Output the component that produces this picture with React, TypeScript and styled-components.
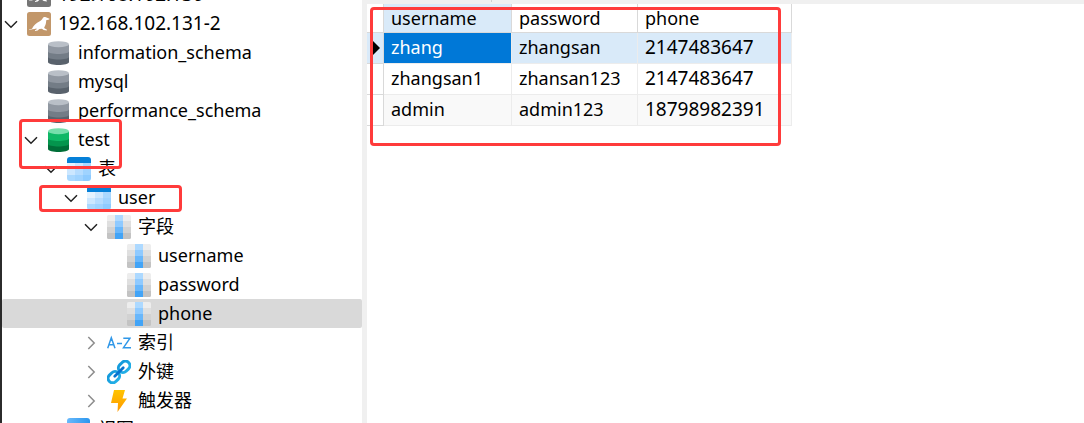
import React from "react";
import styled, { createGlobalStyle } from "styled-components";

const GlobalStyle = createGlobalStyle`
  *, *::before, *::after { box-sizing: border-box; }
  body {
    margin: 0;
    background: #fff;
    color: #000;
    font-family: "Noto Sans", "Noto Sans CJK SC", sans-serif;
    font-size: 18px;
  }
`;

const Window = styled.div`
  position: relative;
  display: flex;
  height: 100vh;
  overflow: hidden;
  border-left: 2px solid #2b2b2b;
`;

const Sidebar = styled.nav`
  flex: 0 0 365px;
  border-right: 5px solid #f0f0f0;
  display: flex;
  flex-direction: column;
  overflow: hidden;
`;

const Tree = styled.ul`
  list-style: none;
  margin: -20px 0 0;
  padding: 0;
`;

const TreeRow = styled.li<{ $level: number; $selected?: boolean }>`
  display: flex;
  align-items: center;
  height: 29px;
  padding-left: ${(p) => p.$level * 20}px;
  border-radius: 2px;
  background: ${(p) => (p.$selected ? "#d9d9d9" : "transparent")};
`;

const Toggle = styled.button`
  width: 18px;
  height: 24px;
  margin-right: 7px;
  padding: 0;
  border: 0;
  background: none;
  display: flex;
  align-items: center;
  justify-content: center;
`;

const ToggleSpace = styled.span`
  width: 25px;
`;

const IconSvg = styled.svg`
  width: 24px;
  height: 24px;
  flex: none;
`;

const Label = styled.span<{ $numeric?: boolean }>`
  margin-left: 7px;
  padding-bottom: 1px;
  line-height: 28px;
  font-size: ${(p) => (p.$numeric ? 19 : 18)}px;
  white-space: nowrap;
`;

const Main = styled.main`
  flex: 1;
  min-width: 0;
  display: flex;
  flex-direction: column;
  align-items: flex-start;
`;

const TopBar = styled.div`
  align-self: stretch;
  height: 4px;
  padding-left: 124px;
  background: #f0f0f0;
`;

const TabEdge = styled.div`
  width: 1px;
  height: 2px;
  background: #d0d0d0;
`;

const Grid = styled.table`
  table-layout: fixed;
  width: 425px;
  border-collapse: separate;
  border-spacing: 0;
`;

const HeadCell = styled.th<{ $active?: boolean }>`
  height: 29px;
  padding: 0 0 0 7px;
  line-height: 28px;
  font-weight: 400;
  text-align: left;
  border-right: 1px solid #d9d9d9;
  border-bottom: 1px solid #d9d9d9;
  background: ${(p) => (p.$active ? "#d9eaf9" : "#fff")};
`;

type RowTone = "current" | "plain" | "striped";
const rowColors: Record<RowTone, string> = {
  current: "#d9eaf9",
  plain: "#fff",
  striped: "#f9f9f9",
};

const GutterCell = styled.td<{ $tone: RowTone }>`
  height: 31px;
  padding: 0;
  border-right: 1px solid #d9d9d9;
  border-bottom: 1px solid #d9d9d9;
  background: ${(p) => (p.$tone === "current" ? "#d9eaf9" : "#fff")};
`;

const Cell = styled.td<{ $tone: RowTone; $picked?: boolean; $numeric?: boolean }>`
  height: 31px;
  padding: 0 0 2px 7px;
  line-height: 28px;
  font-size: ${(p) => (p.$numeric ? 19 : 18)}px;
  border-right: 1px solid #ececec;
  border-bottom: 1px solid #ececec;
  color: ${(p) => (p.$picked ? "#fff" : "#000")};
  background: ${(p) => (p.$picked ? "#0078d7" : rowColors[p.$tone])};
`;

const Pointer = styled.svg`
  display: block;
  width: 9px;
  height: 14px;
  margin-left: 5px;
`;

const Marker = styled.div<{ $x: number; $y: number; $w: number; $h: number }>`
  position: absolute;
  left: ${(p) => p.$x}px;
  top: ${(p) => p.$y}px;
  width: ${(p) => p.$w}px;
  height: ${(p) => p.$h}px;
  border: 3px solid #ff3b3b;
  border-radius: 4px;
  pointer-events: none;
`;

const Chevron = ({ open }: { open: boolean }) => (
  <svg width="14" height="14" viewBox="0 0 14 14" fill="none">
    {open ? (
      <path d="M1 4.2 7 10.2 13 4.2" stroke="#222" strokeWidth="1.500" />
    ) : (
      <path d="M4.300 1 10.200 7 4.300 13" stroke="#8c8c8c" strokeWidth="1.500" />
    )}
  </svg>
);

const SealIcon = ({ color }: { color: string }) => (
  <IconSvg viewBox="0 0 24 24">
    <rect width="24" height="24" rx="2.5" fill={color} />
    <path
      fill="#fff"
      d="M1.800 17.800 5 16.800C6.500 13.500 9 11 12.800 9.300c1.700-.8 2.400-1.900 2.900-3 .6-1.300 1.900-1.700 3.200-1.100l3.600 1.500-.3.800-3 .8c-.1 2.400-.3 4.400-1.500 6.200l-.6 1.400 2.900 1.800-.2.900-3.100-.6-1.800-1.300-2.600.4-1.600 1.500-2.700.4v-.7l1.700-1-.3-.9c-1.500.5-2.600.6-4 .8l-3 .9-.4-.4 1-.7z"
    />
  </IconSvg>
);

const DatabaseIcon = ({ tones }: { tones: string[] }) => (
  <IconSvg viewBox="0 0 24 24">
    <path d="M1 15.500h21v5.500c0 4-21 4-21 0z" fill={tones[3]} />
    <path d="M1 10h21v6c0 3.300-21 3.300-21 0z" fill={tones[2]} />
    <path d="M1 3.500h21v7c0 3.300-21 3.300-21 0z" fill={tones[1]} />
    <ellipse cx="11.500" cy="3.200" rx="10.500" ry="3" fill={tones[0]} />
  </IconSvg>
);

const GREY = ["#b9bfc7", "#9097a1", "#737c86", "#59626c"];
const GREEN = ["#76dfac", "#0fb866", "#04954d", "#006e38"];

const TableIcon = () => (
  <IconSvg viewBox="0 0 24 24">
    <clipPath id="tableShape"><rect width="24" height="24" rx="3" /></clipPath>
    <g clipPath="url(#tableShape)" shapeRendering="crispEdges">
      <rect width="24" height="6" fill="#0580d8" />
      <rect y="6" width="8" height="6" fill="#e5f3ff" />
      <rect x="8" y="6" width="8" height="6" fill="#cce7ff" />
      <rect x="16" y="6" width="8" height="6" fill="#a9d8ff" />
      <rect y="12" width="8" height="6" fill="#cce7ff" />
      <rect x="8" y="12" width="8" height="6" fill="#b5dcff" />
      <rect x="16" y="12" width="8" height="6" fill="#9fd3ff" />
      <rect y="18" width="8" height="6" fill="#a9d8ff" />
      <rect x="8" y="18" width="8" height="6" fill="#9fd3ff" />
      <rect x="16" y="18" width="8" height="6" fill="#8ecbff" />
    </g>
  </IconSvg>
);

const FIELD_ROWS = [
  ["#ededed", "#add9ff"],
  ["#dfdfdf", "#8fcaff"],
  ["#d2d2d2", "#69b7fb"],
  ["#c3c3c3", "#42a4f7"],
];

const FieldIcon = () => (
  <IconSvg viewBox="0 0 24 24">
    <clipPath id="fieldShape"><rect width="24" height="24" rx="1.500" /></clipPath>
    <g clipPath="url(#fieldShape)" shapeRendering="crispEdges">
      {FIELD_ROWS.map(([side, middle], i) => (
        <g key={side}>
          <rect y={i * 6} width="24" height="6" fill={side} />
          <rect x="8" y={i * 6} width="8" height="6" fill={middle} />
        </g>
      ))}
    </g>
  </IconSvg>
);

const IndexIcon = () => (
  <IconSvg viewBox="0 0 24 24" fill="none" stroke="#2f97e8" strokeWidth="1.500">
    <path d="M.7 17.300 4.300 6.700 8 17.300M2 13.700h4.700M10 12.500h5M16.300 7.200H23L16.500 16.700H24" />
  </IconSvg>
);

const LinkIcon = () => (
  <IconSvg viewBox="0 0 24 24" fill="none">
    <linearGradient id="linkBlue" x1="0" y1="0" x2="0" y2="1">
      <stop offset="0" stopColor="#159bdc" />
      <stop offset="1" stopColor="#22aee6" />
    </linearGradient>
    <g transform="rotate(-45 12 12)">
      <rect x="-1.500" y="7.500" width="12.500" height="9" rx="4.500" stroke="url(#linkBlue)" strokeWidth="3" />
      <rect x="13" y="7.500" width="12.500" height="9" rx="4.500" stroke="url(#linkBlue)" strokeWidth="3" />
      <path d="M6 12h12" stroke="#0873cf" strokeWidth="2.800" strokeLinecap="round" />
    </g>
  </IconSvg>
);

const BoltIcon = () => (
  <IconSvg viewBox="0 0 24 24">
    <linearGradient id="boltGold" x1="0" y1="0" x2="0" y2="1">
      <stop offset="0" stopColor="#ffc400" />
      <stop offset="1" stopColor="#ff9800" />
    </linearGradient>
    <path d="M7 1h11l-2.500 8.500H20L10.500 23 11 14H4z" fill="url(#boltGold)" />
  </IconSvg>
);

const ViewIcon = () => (
  <IconSvg viewBox="0 0 24 24">
    <linearGradient id="viewBlue">
      <stop offset="0" stopColor="#69b9fb" />
      <stop offset="1" stopColor="#2b96ee" />
    </linearGradient>
    <rect width="23" height="23" rx="3" fill="url(#viewBlue)" />
  </IconSvg>
);

interface Node {
  label: string;
  level: number;
  icon: React.ReactNode;
  open?: boolean;
  numeric?: boolean;
  selected?: boolean;
}

const nodes: Node[] = [
  { label: "192.168.102.130", level: 0, icon: <SealIcon color="#757575" />, numeric: true },
  { label: "192.168.102.131-2", level: 0, icon: <SealIcon color="#c2976a" />, open: true, numeric: true },
  { label: "information_schema", level: 1, icon: <DatabaseIcon tones={GREY} /> },
  { label: "mysql", level: 1, icon: <DatabaseIcon tones={GREY} /> },
  { label: "performance_schema", level: 1, icon: <DatabaseIcon tones={GREY} /> },
  { label: "test", level: 1, icon: <DatabaseIcon tones={GREEN} />, open: true },
  { label: "表", level: 2, icon: <TableIcon />, open: true },
  { label: "user", level: 3, icon: <TableIcon />, open: true },
  { label: "字段", level: 4, icon: <FieldIcon />, open: true },
  { label: "username", level: 5, icon: <FieldIcon /> },
  { label: "password", level: 5, icon: <FieldIcon /> },
  { label: "phone", level: 5, icon: <FieldIcon />, selected: true },
  { label: "索引", level: 4, icon: <IndexIcon />, open: false },
  { label: "外键", level: 4, icon: <LinkIcon />, open: false },
  { label: "触发器", level: 4, icon: <BoltIcon />, open: false },
  { label: "视图", level: 2, icon: <ViewIcon /> },
];

const records: { tone: RowTone; values: string[] }[] = [
  { tone: "current", values: ["zhang", "zhangsan", "2147483647"] },
  { tone: "plain", values: ["zhangsan1", "zhansan123", "2147483647"] },
  { tone: "striped", values: ["admin", "admin123", "18798982391"] },
];

export default function App() {
  return (
    <>
      <GlobalStyle />
      <Window>
        <Sidebar>
          <Tree>
            {nodes.map((n) => (
              <TreeRow key={n.level + n.label} $level={n.level} $selected={n.selected}>
                {n.open === undefined ? (
                  <ToggleSpace />
                ) : (
                  <Toggle type="button" aria-expanded={n.open} aria-label={n.label}>
                    <Chevron open={n.open} />
                  </Toggle>
                )}
                {n.icon}
                <Label $numeric={n.numeric}>{n.label}</Label>
              </TreeRow>
            ))}
          </Tree>
        </Sidebar>
        <Main>
          <TopBar>
            <TabEdge />
          </TopBar>
          <Grid>
            <colgroup>
              <col style={{ width: 17 }} />
              <col style={{ width: 128 }} />
              <col style={{ width: 126 }} />
              <col style={{ width: 154 }} />
            </colgroup>
            <thead>
              <tr>
                <HeadCell />
                <HeadCell $active>username</HeadCell>
                <HeadCell>password</HeadCell>
                <HeadCell>phone</HeadCell>
              </tr>
            </thead>
            <tbody>
              {records.map((r) => (
                <tr key={r.values[0]}>
                  <GutterCell $tone={r.tone}>
                    {r.tone === "current" && (
                      <Pointer viewBox="0 0 9 14">
                        <path d="M0 0h1l7 7-7 7H0z" />
                      </Pointer>
                    )}
                  </GutterCell>
                  {r.values.map((v, i) => (
                    <Cell
                      key={i}
                      $tone={r.tone}
                      $picked={r.tone === "current" && i === 0}
                      $numeric={i === 2}
                    >
                      {v}
                    </Cell>
                  ))}
                </tr>
              ))}
            </tbody>
          </Grid>
        </Main>
        <Marker $x={17} $y={119} $w={103} $h={50} />
        <Marker $x={37} $y={185} $w={143} $h={27} />
        <Marker $x={368} $y={7} $w={411} $h={139} />
      </Window>
    </>
  );
}
